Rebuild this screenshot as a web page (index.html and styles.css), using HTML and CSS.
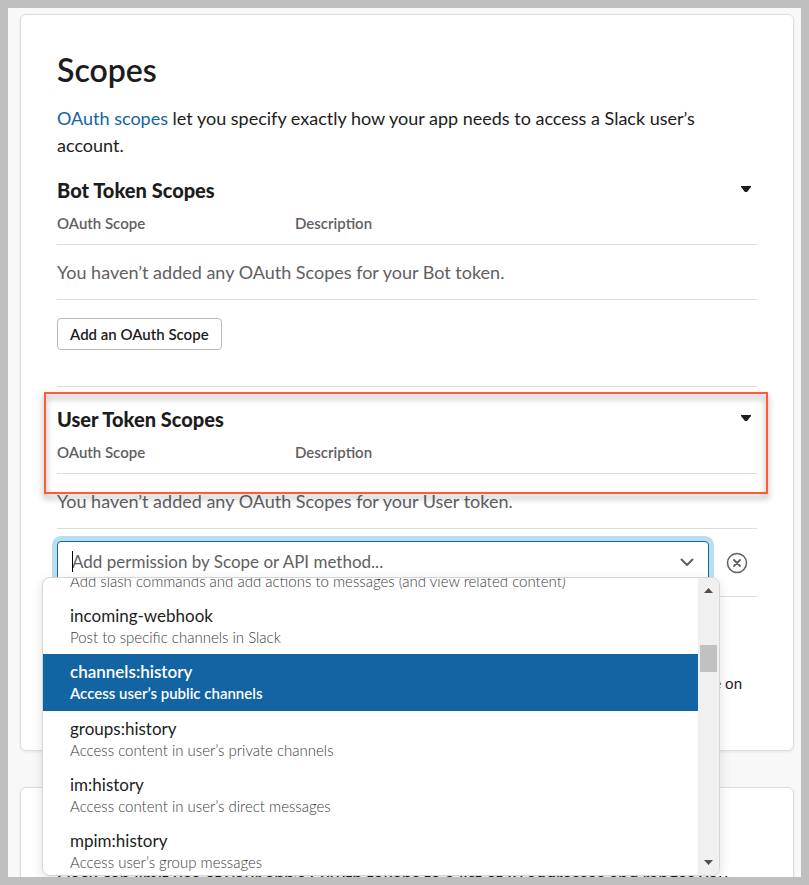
FILE: index.html
```html
<!DOCTYPE html>
<html lang="en">
<head>
  <meta charset="UTF-8" />
  <meta name="viewport" content="width=device-width, initial-scale=1.0"/>
  <title>Scopes</title>
  <link rel="stylesheet" href="styles.css">
</head>
<body>
  <main class="page">
    <section class="card">
      <h1>Scopes</h1>
      <p class="intro"><a href="#">OAuth scopes</a> let you specify exactly how your app needs to access a Slack user’s account.</p>

      <!-- Bot token -->
      <div class="token-section">
        <div class="token-header">
          <h2>Bot Token Scopes</h2>
          <button class="toggle" aria-label="Collapse Bot Token Scopes">
            <svg width="12" height="8" viewBox="0 0 12 8"><path d="M1 1h10v1L7 7H5L1 2z" fill="#1d1c1d"/></svg>
          </button>
        </div>
        <table>
          <thead>
            <tr><th class="col-scope">OAuth Scope</th><th>Description</th></tr>
          </thead>
          <tbody>
            <tr><td colspan="2">You haven’t added any OAuth Scopes for your Bot token.</td></tr>
          </tbody>
        </table>
        <button class="btn">Add an OAuth Scope</button>
      </div>

      <!-- User token -->
      <div class="token-section user">
        <div class="highlight"></div>
        <div class="token-header">
          <h2>User Token Scopes</h2>
          <button class="toggle" aria-label="Collapse User Token Scopes">
            <svg width="12" height="8" viewBox="0 0 12 8"><path d="M1 1h10v1L7 7H5L1 2z" fill="#1d1c1d"/></svg>
          </button>
        </div>
        <table>
          <thead>
            <tr><th class="col-scope">OAuth Scope</th><th>Description</th></tr>
          </thead>
          <tbody>
            <tr><td colspan="2">You haven’t added any OAuth Scopes for your User token.</td></tr>
          </tbody>
        </table>

        <div class="picker">
          <div class="combo">
            <input type="text" class="combo-input" aria-label="Add permission by Scope or API method" placeholder="Add permission by Scope or API method..." />
            <span class="caret"></span>
            <svg class="chevron" width="14" height="9" viewBox="0 0 14 9"><path d="M1.500 1.500L7 7l5.500-5.500" fill="none" stroke="#616061" stroke-width="2" stroke-linecap="round" stroke-linejoin="round"/></svg>

            <div class="menu">
              <ul class="options" role="listbox" aria-label="Scopes">
                <li class="option first" role="option"><small>Add slash commands and add actions to messages (and view related content)</small></li>
                <li class="option" role="option"><span>incoming-webhook</span><small>Post to specific channels in Slack</small></li>
                <li class="option selected" role="option" aria-selected="true"><span>channels:history</span><small>Access user’s public channels</small></li>
                <li class="option" role="option"><span>groups:history</span><small>Access content in user’s private channels</small></li>
                <li class="option" role="option"><span>im:history</span><small>Access content in user’s direct messages</small></li>
                <li class="option" role="option"><span>mpim:history</span><small>Access user’s group messages</small></li>
              </ul>
              <div class="scrollbar">
                <svg width="9" height="5" viewBox="0 0 9 5"><path d="M4.500 0L9 5H0z" fill="#505050"/></svg>
                <div class="thumb"></div>
                <svg width="9" height="5" viewBox="0 0 9 5"><path d="M0 0h9L4.500 5z" fill="#505050"/></svg>
              </div>
            </div>
          </div>
          <button class="remove" aria-label="Cancel">
            <svg width="22" height="22" viewBox="0 0 22 22" fill="none" stroke="#616061"><circle cx="11" cy="11" r="9.500" stroke-width="1.500"/><path d="M8 8l6 6M14 8l-6 6" stroke-width="1.800" stroke-linecap="round"/></svg>
          </button>
        </div>
      </div>

      <p class="note">available on</p>
    </section>

    <section class="card restrict">
      <p>Slack can limit use of your app’s OAuth tokens to a list of IP addresses and ranges you</p>
    </section>
  </main>
</body>
</html>
```

FILE: styles.css
```css
* {
  box-sizing: border-box;
}

body {
  margin: 0;
  font-family: Lato, sans-serif;
  font-size: 18px;
  line-height: 27px;
  color: #1d1c1d;
}

h1, h2, p, ul {
  margin: 0;
}

button {
  font-family: inherit;
  cursor: pointer;
}

svg {
  display: block;
}

.page {
  height: 100vh;
  overflow: hidden;
  border: 8px solid #bfbfbf;
  background: #f8f8f8;
  padding: 6px 7px 0 12px;
}

.card {
  background: #fff;
  border: 1px solid #ddd;
  border-radius: 6px;
  box-shadow: 0 1px 3px rgba(0, 0, 0, 0.08);
  padding: 36px;
  margin-bottom: 36px;
}

h1 {
  font-size: 32px;
  line-height: 38px;
  font-weight: 600;
  margin-bottom: 16px;
}

.intro {
  margin-bottom: 16px;
}

.intro a {
  color: #1264a3;
  text-decoration: none;
}

/* token sections */
.token-header {
  display: flex;
  justify-content: space-between;
  align-items: center;
}

h2 {
  font-size: 20px;
  line-height: 30px;
  font-weight: 900;
}

.toggle {
  border: none;
  background: none;
  padding: 0 5px 2px;
}

table {
  width: 100%;
  border-collapse: separate;
  border-spacing: 0;
}

th {
  text-align: left;
  font-size: 15px;
  line-height: 22px;
  font-weight: 600;
  color: #616061;
  padding: 7px 0 10px;
  border-bottom: 1px solid #ddd;
}

.col-scope {
  width: 34%;
}

td {
  color: #616061;
  padding: 14px 0 13px;
  border-bottom: 1px solid #ddd;
}

.btn {
  display: block;
  height: 32px;
  margin-top: 18px;
  padding: 0 12px 1px;
  background: #fff;
  border: 1px solid #bbb;
  border-radius: 4px;
  font-size: 15px;
  font-weight: 600;
  color: #1d1c1d;
}

.user {
  position: relative;
  margin-top: 36px;
  padding-top: 17px;
  border-top: 1px solid #ddd;
  border-bottom: 1px solid #ddd;
}

.highlight {
  position: absolute;
  top: 5px;
  left: -13px;
  right: -11px;
  height: 102px;
  border: 2px solid #ff5c35;
  filter: drop-shadow(0 4px 3px rgba(0, 0, 0, 0.45));
  pointer-events: none;
}

/* scope picker */
.picker {
  display: flex;
  align-items: center;
  gap: 17px;
  padding: 12px 9px 11px 0;
}

.combo {
  position: relative;
  flex: 1;
}

.combo-input {
  display: block;
  width: 100%;
  height: 44px;
  padding: 0 40px 3px 14px;
  border: 1px solid #1264a3;
  border-radius: 4px;
  box-shadow: 0 0 0 5px #b9dfee;
  font-family: inherit;
  font-size: 17px;
  outline: none;
}

.combo-input::placeholder {
  color: #616061;
  opacity: 1;
}

.caret {
  position: absolute;
  left: 15px;
  top: 10px;
  width: 1px;
  height: 21px;
  background: #000;
}

.chevron {
  position: absolute;
  right: 15px;
  top: 17px;
}

.remove {
  border: none;
  background: none;
  padding: 0;
}

.menu {
  position: absolute;
  z-index: 2;
  top: 36px;
  left: -15px;
  right: -11px;
  height: 299px;
  display: flex;
  overflow: hidden;
  background: #fff;
  border: 1px solid #d5d5d5;
  border-radius: 8px;
  box-shadow: 0 4px 12px rgba(0, 0, 0, 0.12);
}

.options {
  flex: 1;
  padding: 0;
  list-style: none;
}

.option {
  padding: 6px 27px 8px;
}

.option span,
.option small {
  display: block;
}

.option span {
  font-size: 17px;
  line-height: 24px;
}

.option small {
  font-size: 15px;
  line-height: 18px;
  font-weight: 300;
  color: #3c3b3c;
}

.option.first {
  margin-top: -12px;
}

.option.selected {
  padding-bottom: 9px;
  background: #1264a3;
  font-weight: 600;
  color: #fff;
}

.option.selected small {
  font-weight: 600;
  color: #fff;
}

.scrollbar {
  display: flex;
  flex-direction: column;
  align-items: center;
  justify-content: space-between;
  width: 21px;
  padding: 10px 0;
  background: #f0f0f0;
}

.thumb {
  width: 17px;
  height: 27px;
  margin: 52px 0 auto;
  background: #c1c1c1;
}

.note {
  margin-top: 75px;
  padding: 0 15px 20px 0;
  font-size: 15px;
  line-height: 22px;
  text-align: right;
}

.restrict {
  padding-top: 77px;
}
```
